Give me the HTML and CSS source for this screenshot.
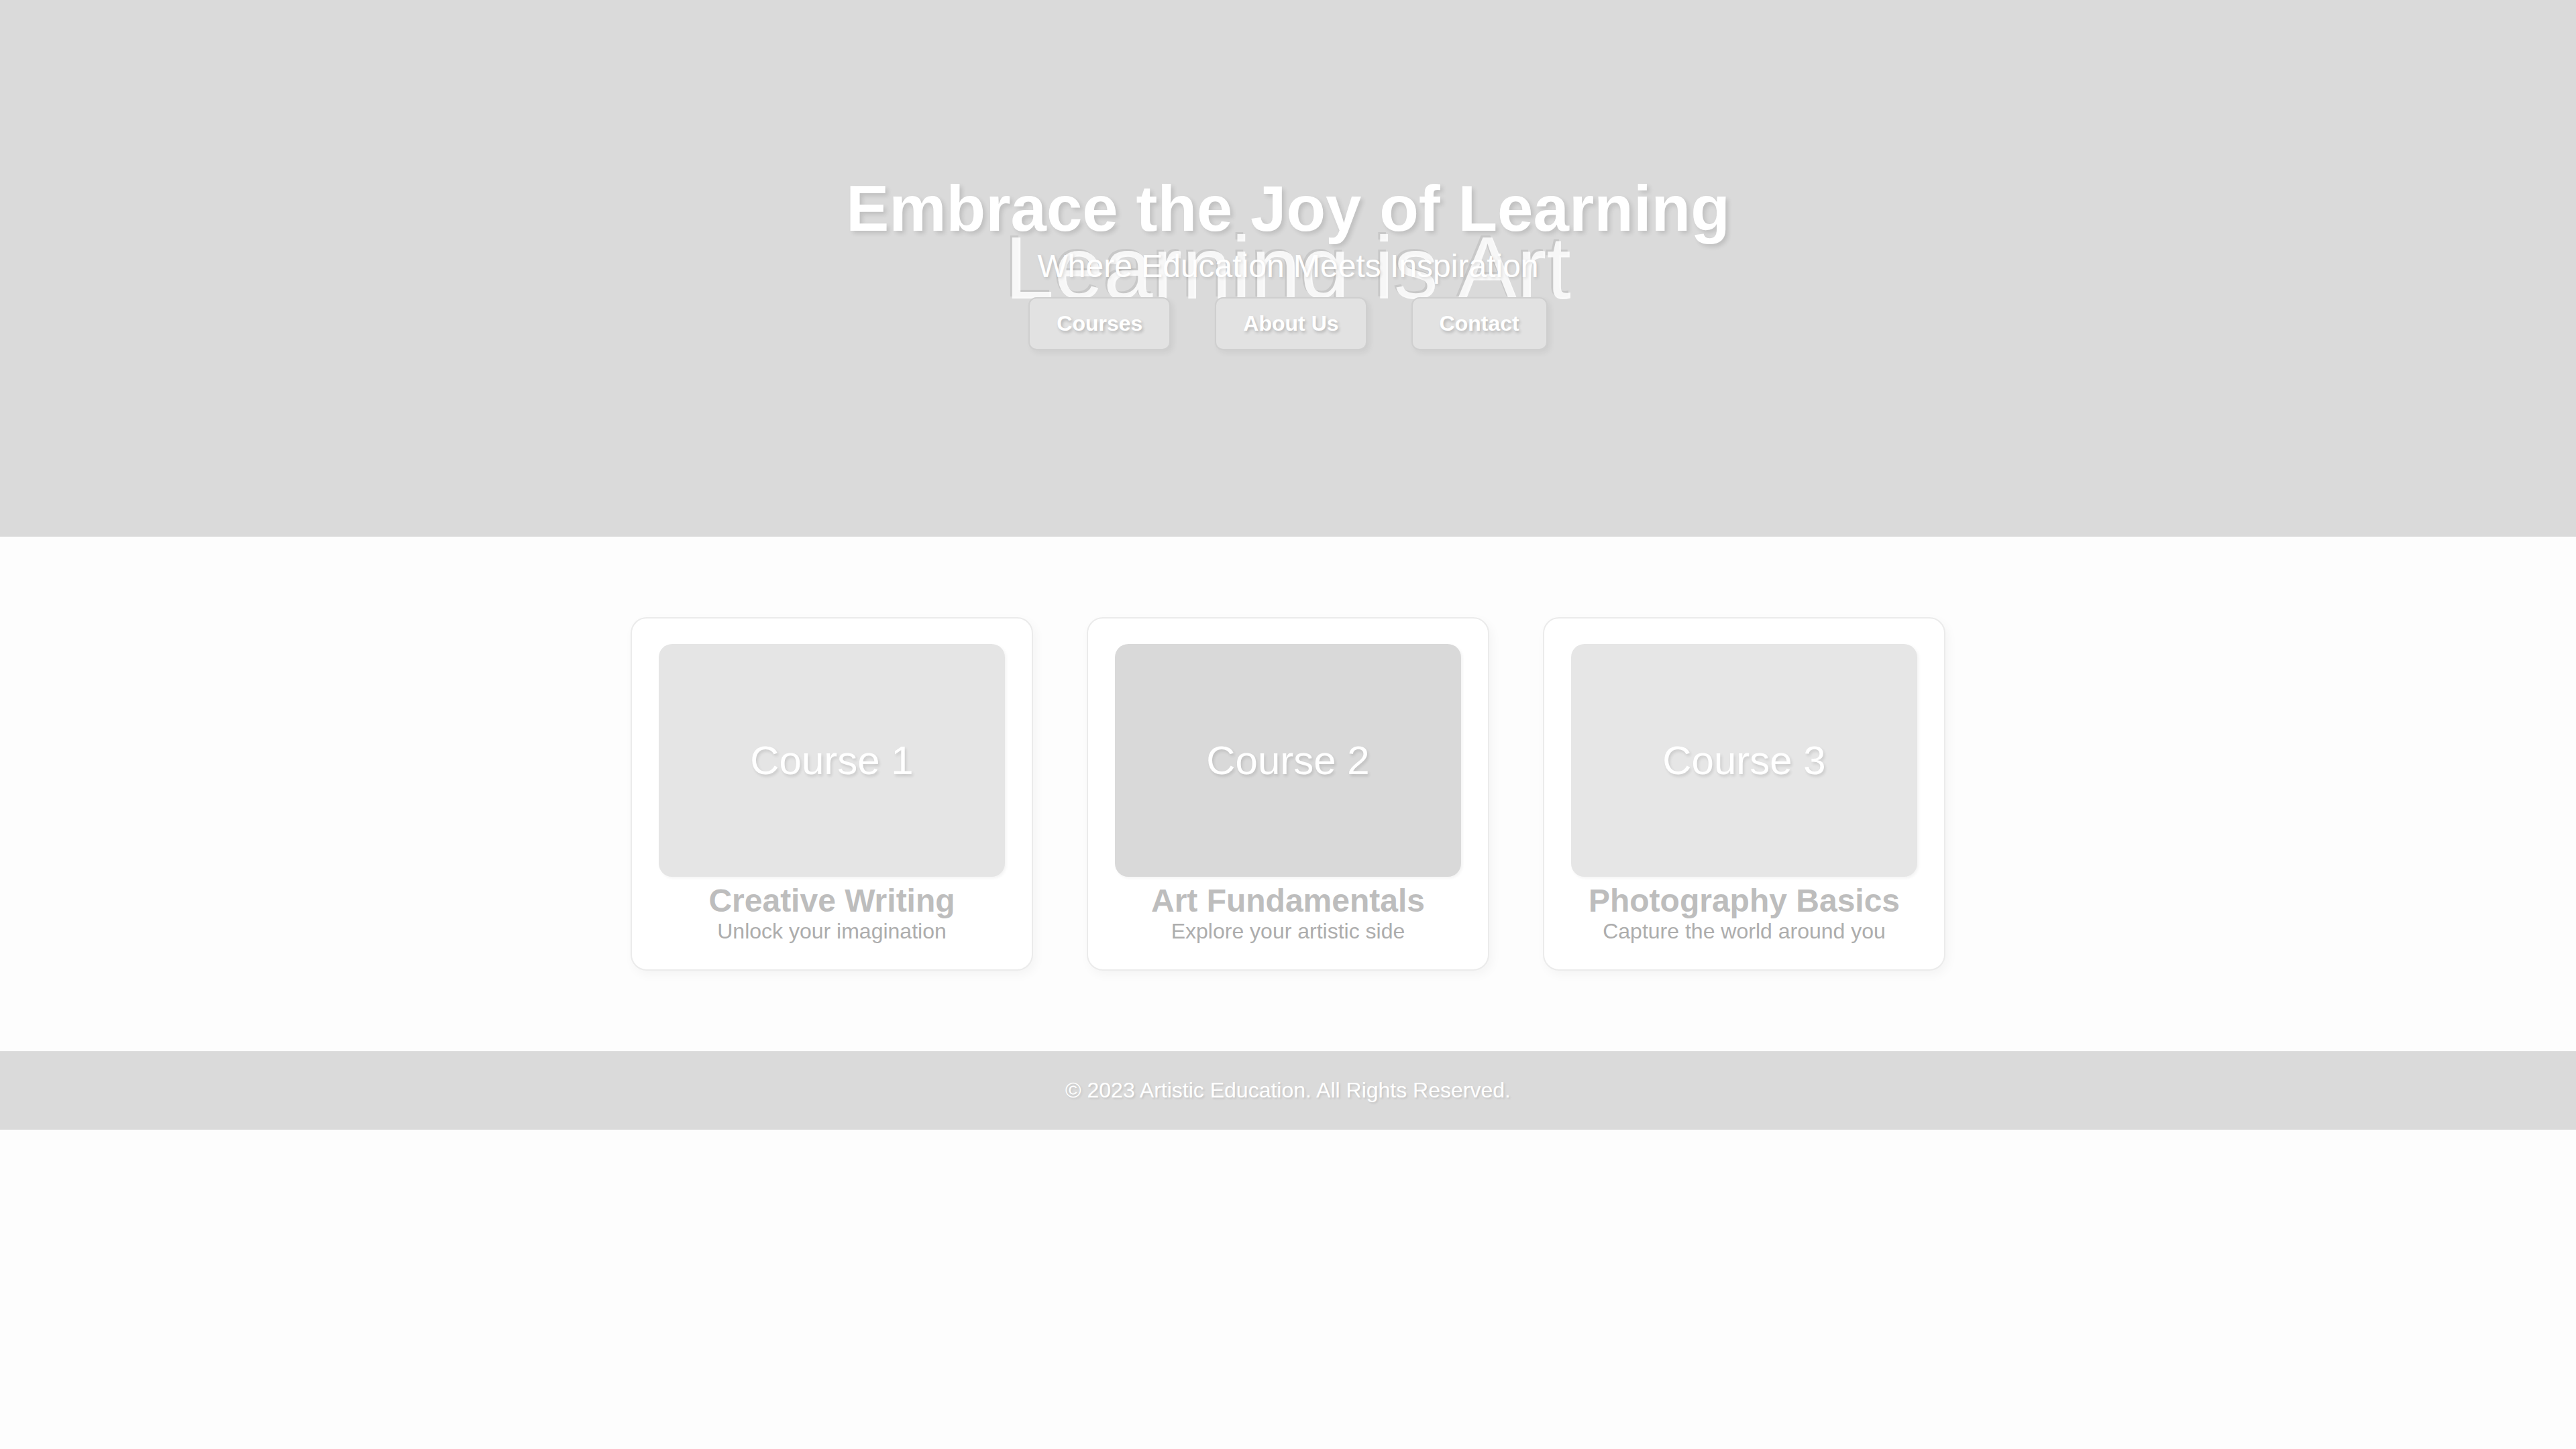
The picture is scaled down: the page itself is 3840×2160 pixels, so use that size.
FILE: index.html
```
<!DOCTYPE html>
<html lang="en">
<head>
<meta charset="utf-8">
<title>Artistic Education</title>
<link rel="stylesheet" href="styles.css">
</head>
<body>
<header class="hero">
  <div class="hero-bg-text">Learning is Art</div>
  <h1 class="hero-title">Embrace the Joy of Learning</h1>
  <p class="hero-sub">Where Education Meets Inspiration</p>
  <nav class="hero-nav">
    <a class="nav-btn" href="#">Courses</a>
    <a class="nav-btn" href="#">About Us</a>
    <a class="nav-btn" href="#">Contact</a>
  </nav>
</header>
<main class="courses">
  <div class="card">
    <div class="card-img img-1">Course 1</div>
    <h2 class="card-title">Creative Writing</h2>
    <p class="card-desc">Unlock your imagination</p>
  </div>
  <div class="card">
    <div class="card-img img-2">Course 2</div>
    <h2 class="card-title">Art Fundamentals</h2>
    <p class="card-desc">Explore your artistic side</p>
  </div>
  <div class="card">
    <div class="card-img img-3">Course 3</div>
    <h2 class="card-title">Photography Basics</h2>
    <p class="card-desc">Capture the world around you</p>
  </div>
</main>
<footer class="footer">
  <p>© 2023 Artistic Education. All Rights Reserved.</p>
</footer>
</body>
</html>
```
FILE: styles.css
```
* { box-sizing: border-box; }
html, body { margin: 0; padding: 0; }
body {
  background: #fdfdfd;
  font-family: "Liberation Sans", Arial, sans-serif;
  color: #fff;
}
.hero {
  position: relative;
  height: 800px;
  background: #dadada;
  display: flex;
  flex-direction: column;
  align-items: center;
  justify-content: center;
  padding-bottom: 22px;
  overflow: hidden;
}
.hero-bg-text {
  position: absolute;
  left: 0;
  right: 0;
  top: 50%;
  transform: translateY(-50%);
  text-align: center;
  font-size: 132px;
  line-height: 1;
  color: rgba(255, 255, 255, 0.85);
  text-shadow: -3px -3px 0 rgba(0, 0, 0, 0.08);
  white-space: nowrap;
}
.hero-title {
  position: relative;
  margin: 0;
  font-size: 96px;
  font-weight: 700;
  line-height: 1.15;
  color: #fff;
  text-shadow: 4px 4px 6px rgba(0, 0, 0, 0.12);
}
.hero-sub {
  position: relative;
  margin: 2px 0 0;
  font-size: 48px;
  line-height: 1.15;
  color: #fff;
  text-shadow: 2px 2px 4px rgba(0, 0, 0, 0.12);
}
.hero-nav {
  position: relative;
  display: flex;
  gap: 66px;
  margin-top: 19px;
}
.nav-btn {
  display: block;
  padding: 19px 40px;
  font-size: 32px;
  font-weight: 700;
  line-height: 1.15;
  color: #fff;
  text-decoration: none;
  background: #e2e2e2;
  border: 2px solid #cfcfcf;
  border-radius: 12px;
  box-shadow: 4px 4px 8px rgba(0, 0, 0, 0.06);
  text-shadow: 2px 3px 4px rgba(0, 0, 0, 0.2);
}
.courses {
  display: flex;
  justify-content: center;
  gap: 80px;
  padding: 120px 0 120px;
}
.card {
  width: 600px;
  padding: 38px 40px 38px;
  background: #fff;
  border: 2px solid #ebebeb;
  border-radius: 24px;
  box-shadow: 4px 6px 16px rgba(0, 0, 0, 0.04);
  text-align: center;
}
.card-img {
  height: 347px;
  border-radius: 20px;
  display: flex;
  align-items: center;
  justify-content: center;
  font-size: 60px;
  color: #fff;
  text-shadow: 2px 3px 4px rgba(0, 0, 0, 0.12);
  box-shadow: 2px 2px 4px rgba(0, 0, 0, 0.05);
}
.img-1 { background: #e5e5e5; }
.img-2 { background: #d9d9d9; }
.img-3 { background: #e6e6e6; }
.card-title {
  margin: 8px 0 0;
  font-size: 48px;
  font-weight: 700;
  line-height: 1.15;
  color: #bdbdbd;
}
.card-desc {
  margin: 0;
  font-size: 32px;
  line-height: 1.15;
  color: #adadad;
}
.footer {
  background: #dadada;
  padding: 40px 0;
  text-align: center;
}
.footer p {
  margin: 0;
  font-size: 32px;
  line-height: 1.15;
  color: #fff;
  text-shadow: 2px 2px 3px rgba(0, 0, 0, 0.1);
}
```
